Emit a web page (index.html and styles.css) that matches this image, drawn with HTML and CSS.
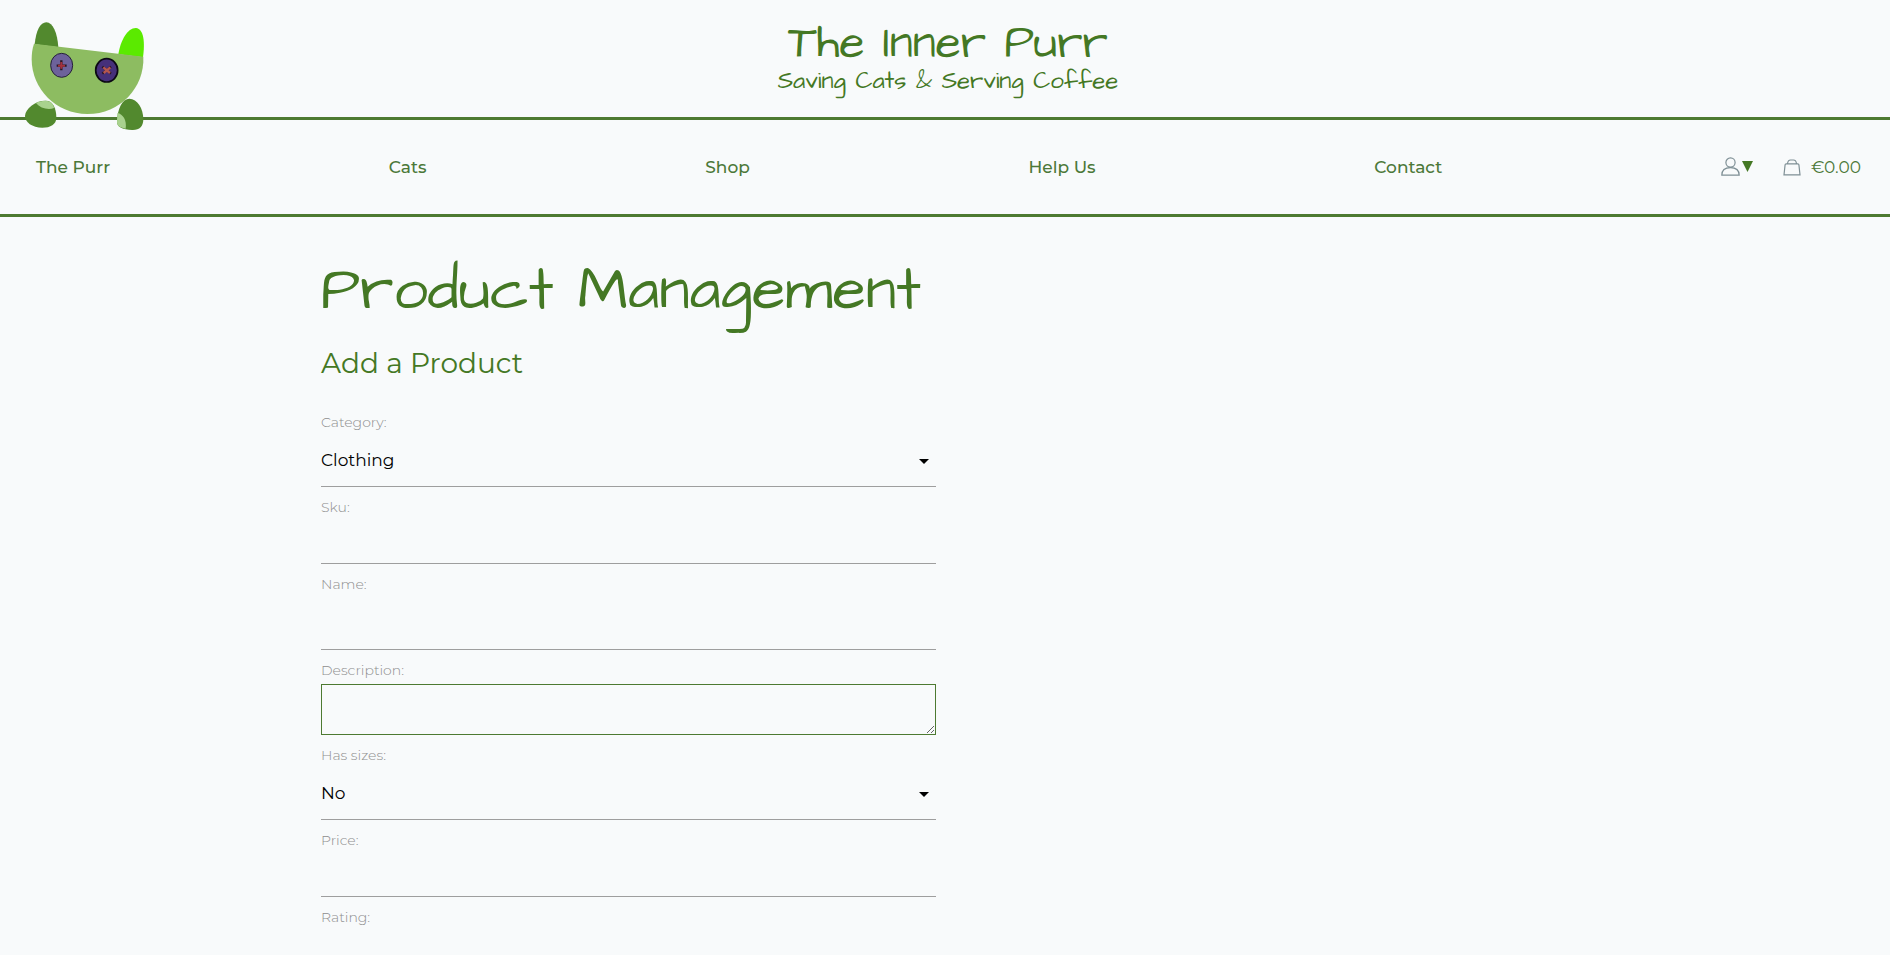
FILE: index.html
```html
<!DOCTYPE html>
<html lang="en">
<head>
<meta charset="utf-8">
<meta name="viewport" content="width=device-width, initial-scale=1">
<title>The Inner Purr</title>
<link rel="stylesheet" href="styles.css">
</head>
<body>
<header class="masthead">
  <a class="logo" href="#" aria-label="The Inner Purr home">
    <svg viewBox="72 66 363 327" width="121" height="109" aria-hidden="true">
      <path fill="#52892e" d="M104 133C108 92 121 67 139 67c20 0 33 32 36 75z"/>
      <path fill="#5bea00" d="M355 163C362 119 384 83 408 84c24 3 27 43 21 88z"/>
      <path fill="#8dbc61" d="M102 131L430 170C434 262 361 342 262 342 168 342 95 267 95 178c0-17 2-32 7-47z"/>
      <ellipse cx="185" cy="196" rx="33" ry="36" fill="#6d629b" stroke="#252039" stroke-width="3"/>
      <path d="M170 197h30M184 181v30" stroke="#2b1722" stroke-width="7"/>
      <path d="M174 197h21M184 186v20" stroke="#a3303c" stroke-width="6"/>
      <ellipse cx="320" cy="211" rx="33" ry="35" fill="#46307a" stroke="#0c0914" stroke-width="5"/>
      <path d="M307 200l26 21M333 200l-26 21" stroke="#2b1722" stroke-width="7"/>
      <path d="M310 202l20 17M331 202l-20 17" stroke="#b4564f" stroke-width="7"/>
      <path fill="#52892e" d="M75 347C77 326 104 302 137 302c22 0 32 23 32 51 0 20-18 30-42 30-30 0-53-17-52-36z"/>
      <path fill="#a9d28e" d="M108 309C123 301 148 298 157 311c3 4 5 8 5 13-16 7-42 1-54-15z"/>
      <path fill="#52892e" d="M351 366C352 325 368 296 388 296c24 0 42 30 42 61 0 23-12 34-34 33-27-1-45-8-45-24z"/>
      <path fill="#a9d28e" d="M352 339C369 342 381 361 377 386 359 383 350 377 351 364z"/>
    </svg>
  </a>
  <p class="brand">The Inner Purr</p>
  <p class="tagline">Saving Cats &amp; Serving Coffee</p>
</header>
<nav class="nav" aria-label="Main">
  <a href="#">The Purr</a>
  <a href="#">Cats</a>
  <a href="#">Shop</a>
  <a href="#">Help Us</a>
  <a href="#">Contact</a>
  <div class="nav-tools">
    <button class="account" type="button" aria-label="Account">
      <svg viewBox="0 0 19 19" width="19" height="19" fill="none" stroke="#7e8f95" stroke-width="1.2" aria-hidden="true"><circle cx="9.5" cy="5.5" r="4.6"/><path d="M.8 18.2c0-5 3.6-7.6 8.7-7.6s8.7 2.6 8.7 7.6z"/></svg>
      <svg viewBox="0 0 11 11" width="11" height="11" aria-hidden="true"><path fill="#447824" d="M0 0h11L5.5 11z"/></svg>
    </button>
    <a class="bag" href="#" aria-label="Shopping bag">
      <svg viewBox="0 0 18 17" width="18" height="17" fill="none" stroke="#7e8f95" stroke-width="1.2" aria-hidden="true"><path d="M3.200 4.800h11.600q1 0 1.100 1L17 15.800H1L2.100 5.800q.1-1 1.100-1zM4.500 4.800C4.800 2 6 1 7.500 1h3c1.500 0 2.700 1 3 3.800"/></svg>
      <span>€0.00</span>
    </a>
  </div>
</nav>
<main class="container">
  <div class="panel">
    <h1>Product Management</h1>
    <h2>Add a Product</h2>
    <form class="form">
      <div class="field">
        <label for="category">Category:</label>
        <div class="select">
          <select id="category"><option>Clothing</option></select>
          <svg viewBox="0 0 10 5" width="10" height="5" aria-hidden="true"><path d="M0 0h10L5 5z"/></svg>
        </div>
      </div>
      <div class="field">
        <label for="sku">Sku:</label>
        <input id="sku" type="text">
      </div>
      <div class="field">
        <label for="name">Name:</label>
        <input id="name" class="tall" type="text">
      </div>
      <div class="field">
        <label for="description">Description:</label>
        <textarea id="description"></textarea>
      </div>
      <div class="field">
        <label for="sizes">Has sizes:</label>
        <div class="select">
          <select id="sizes"><option>No</option></select>
          <svg viewBox="0 0 10 5" width="10" height="5" aria-hidden="true"><path d="M0 0h10L5 5z"/></svg>
        </div>
      </div>
      <div class="field">
        <label for="price">Price:</label>
        <input id="price" type="text">
      </div>
      <div class="field">
        <label for="rating">Rating:</label>
        <input id="rating" type="text">
      </div>
    </form>
  </div>
</main>
</body>
</html>
```
FILE: styles.css
```css
* { box-sizing: border-box; }

body {
  margin: 0;
  background: #f8fafb;
  color: #447824;
  font-family: Montserrat, Inter, sans-serif;
  font-size: 17px;
}

a { color: inherit; text-decoration: none; }
h1, h2, p { margin: 0; font-weight: 400; }

.masthead {
  position: relative;
  padding: 21px 16px 22px 22px;
  border-bottom: 3px solid #4d7a31;
  text-align: center;
}

.logo {
  position: absolute;
  left: 24px;
  top: 22px;
  line-height: 0;
}

.brand, .tagline, h1 { font-family: "Architects Daughter", "DejaVu Sans", sans-serif; }
.brand { font-size: 46px; line-height: 46px; }
.tagline { font-size: 24px; line-height: 28px; }

.nav {
  display: flex;
  flex-wrap: wrap;
  justify-content: space-between;
  align-items: center;
  min-height: 97px;
  padding: 0 29px 0 36px;
  border-bottom: 3px solid #4d7a31;
  color: #4b7838;
  font-size: 17px;
  font-weight: 500;
}

.nav-tools, .account, .bag { display: flex; align-items: center; }
.nav-tools { gap: 30px; }
.account { gap: 2px; padding: 0 0 2px; border: 0; background: none; }
.bag { gap: 10px; font-weight: 400; }

.container {
  display: grid;
  grid-template-columns: 1fr 1fr;
  gap: 18px;
  max-width: 1280px;
  margin: 0 auto;
  padding: 34px 16px;
}

h1 { font-size: 61px; line-height: 80px; white-space: nowrap; }
h2 { margin-top: 12px; font-size: 28px; line-height: 40px; }

.form {
  display: flex;
  flex-direction: column;
  gap: 11px;
  margin-top: 30px;
}

.field { display: flex; flex-direction: column; }

label {
  margin-bottom: 2px;
  color: #8e8e8e;
  font-size: 14px;
  line-height: 18px;
  font-weight: 300;
}

input, select {
  width: 100%;
  height: 46px;
  padding: 0;
  border: 0;
  border-bottom: 1px solid #9e9e9e;
  border-radius: 0;
  background: none;
  color: #000;
  font: inherit;
}

select {
  height: 54px;
  appearance: none;
}

.tall { height: 55px; }

.select { position: relative; }
.select svg {
  position: absolute;
  right: 7px;
  top: 26px;
  pointer-events: none;
}

textarea {
  width: 100%;
  height: 51px;
  margin-top: 3px;
  border: 1px solid #4d7a31;
  background: none;
  font: inherit;
  resize: vertical;
}
```
